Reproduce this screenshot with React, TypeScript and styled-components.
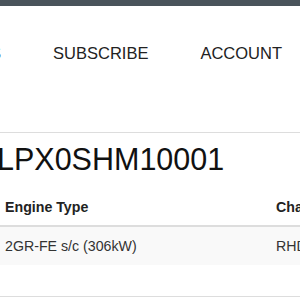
import React from 'react';
import styled, { createGlobalStyle } from 'styled-components';

const GlobalStyle = createGlobalStyle`
  html, body {
    margin: 0;
    padding: 0;
    background: #fff;
    overflow: hidden;
  }
  body {
    font-family: 'Liberation Sans', Arial, sans-serif;
    color: #222;
  }
`;

const TopBar = styled.div`
  height: 6px;
  background: #4a545b;
`;

const Header = styled.header`
  height: 127px;
  box-sizing: border-box;
  padding: 37px 18px 0 0;
  border-bottom: 1px solid #ddd;
  overflow: hidden;
`;

const Nav = styled.nav`
  display: flex;
  justify-content: flex-end;
  gap: 52px;
`;

const NavItem = styled.a`
  flex-shrink: 0;
  font-size: 16.5px;
  line-height: 20px;
  color: #222;
  text-decoration: none;
  text-transform: uppercase;
  white-space: nowrap;
`;

const Main = styled.main`
  margin-left: -3px;
`;

const Title = styled.h1`
  margin: 9px 0 0;
  font-size: 30.5px;
  line-height: 34px;
  font-weight: normal;
  color: #111;
  white-space: nowrap;
`;

const Table = styled.table`
  margin-top: 13px;
  border-collapse: collapse;
  width: 400px;
  font-size: 14.2px;
  line-height: 20px;
`;

const Th = styled.th<{ $width?: number }>`
  text-align: left;
  padding: 8px;
  font-weight: bold;
  color: #222;
  border-bottom: 2px solid #ddd;
  white-space: nowrap;
  width: ${p => (p.$width ? `${p.$width}px` : 'auto')};
  box-sizing: border-box;
`;

const Tr = styled.tr<{ $striped?: boolean }>`
  background: ${p => (p.$striped ? '#f9f9f9' : 'transparent')};
`;

const Td = styled.td`
  padding: 9px 8px;
  border-top: 1px solid #ddd;
  color: #333;
  white-space: nowrap;
`;

const Divider = styled.hr`
  margin: 31px 0 0;
  border: 0;
  border-top: 1px solid #ddd;
`;

const navItems = ['News', 'Subscribe', 'Account'];

const App = () => (
  <>
    <GlobalStyle />
    <TopBar />
    <Header>
      <Nav>
        {navItems.map(item => (
          <NavItem key={item} href="#">{item}</NavItem>
        ))}
      </Nav>
    </Header>
    <Main>
      <Title>LPX0SHM10001</Title>
      <Table>
        <thead>
          <tr>
            <Th $width={271}>Engine Type</Th>
            <Th>Chassis</Th>
          </tr>
        </thead>
        <tbody>
          <Tr $striped>
            <Td>2GR-FE s/c (306kW)</Td>
            <Td>RHD</Td>
          </Tr>
        </tbody>
      </Table>
    </Main>
    <Divider />
  </>
);

export default App;
